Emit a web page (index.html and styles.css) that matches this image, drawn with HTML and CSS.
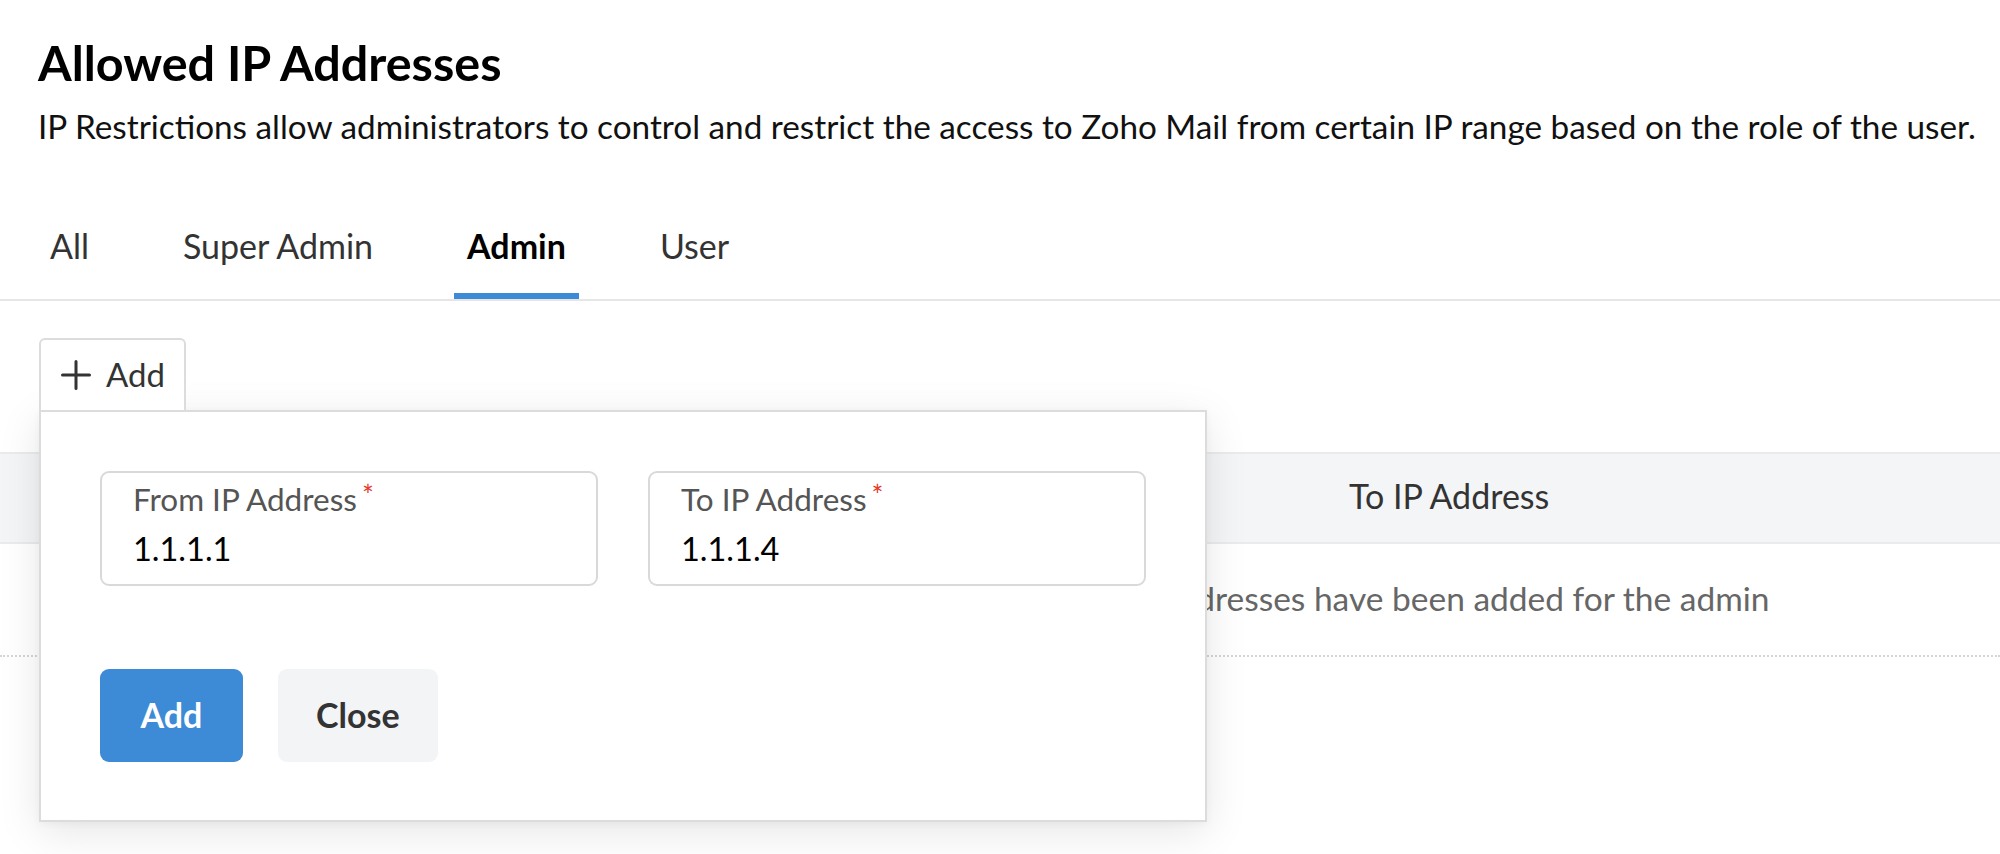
FILE: index.html
```html
<!DOCTYPE html>
<html lang="en">
<head>
<meta charset="utf-8">
<title>Allowed IP Addresses</title>
<link rel="stylesheet" href="styles.css">
</head>
<body>
<div class="page">
  <header class="head">
    <h1 class="title">Allowed IP Addresses</h1>
    <p class="desc">IP Restrictions allow administrators to control and restrict the access to Zoho Mail from certain IP range based on the role of the user.</p>
  </header>

  <nav class="tabs">
    <div class="tab">All</div>
    <div class="tab">Super Admin</div>
    <div class="tab active">Admin</div>
    <div class="tab">User</div>
  </nav>

  <div class="toolbar">
    <div class="add-wrap">
      <button class="add-toggle" type="button">
        <svg class="plus" width="32" height="32" viewBox="0 0 32 32" aria-hidden="true">
          <path d="M16 2.5V29.5M2.5 16H29.5" stroke="#333" stroke-width="3" stroke-linecap="round" fill="none"/>
        </svg>
        <span>Add</span>
      </button>
      <div class="popup">
        <div class="fields">
          <div class="field">
            <label class="field-label">From IP Address<span class="req">*</span></label>
            <input class="field-input" type="text" value="1.1.1.1">
          </div>
          <div class="field">
            <label class="field-label">To IP Address<span class="req">*</span></label>
            <input class="field-input" type="text" value="1.1.1.4">
          </div>
        </div>
        <div class="actions">
          <button class="btn btn-primary" type="button">Add</button>
          <button class="btn btn-secondary" type="button">Close</button>
        </div>
      </div>
    </div>
  </div>

  <section class="table">
    <div class="thead">
      <div class="th th-from">From IP Address</div>
      <div class="th th-to">To IP Address</div>
    </div>
    <div class="empty">No IP addresses have been added for the admin</div>
  </section>
</div>
</body>
</html>
```

FILE: styles.css
```css
* { box-sizing: border-box; }

html, body {
  margin: 0;
  padding: 0;
  background: #ffffff;
}

body {
  font-family: Lato, "Open Sans", "Liberation Sans", sans-serif;
  color: #111;
  width: 2000px;
  height: 854px;
  overflow: hidden;
}

.page {
  display: flex;
  flex-direction: column;
}

.head {
  padding: 33px 38px 0;
}

.title {
  margin: 0;
  font-size: 48.5px;
  line-height: 1.2;
  font-weight: 700;
  color: #000;
}

.desc {
  margin: 16px 0 0;
  font-size: 33.3px;
  line-height: 1.2;
  color: #111;
  white-space: nowrap;
}

.tabs {
  margin-top: 79px;
  display: flex;
  gap: 68px;
  padding-left: 37px;
  border-bottom: 2px solid #e6e6e6;
}

.tab {
  padding: 0 13px 26px;
  font-size: 34px;
  line-height: 1.2;
  color: #333;
  border-bottom: 6px solid transparent;
}

.tab.active {
  font-weight: 700;
  color: #000;
  border-bottom-color: #3d8ad6;
}

.toolbar {
  margin-top: 37px;
  padding-left: 39px;
  display: flex;
}

.add-wrap {
  position: relative;
}

.add-toggle {
  position: relative;
  z-index: 3;
  display: flex;
  align-items: center;
  gap: 14px;
  height: 72px;
  padding: 0 19px;
  background: #fff;
  border: 2px solid #dcdcdc;
  border-bottom: none;
  border-radius: 6px 6px 0 0;
  font-family: inherit;
  font-size: 33px;
  line-height: 1.2;
  color: #333;
}

.plus { display: block; }

.popup {
  position: absolute;
  z-index: 2;
  top: 100%;
  left: 0;
  width: 1168px;
  background: #fff;
  border: 2px solid #dcdcdc;
  padding: 59px 59px 58px;
  box-shadow: 0 10px 40px rgba(0, 0, 0, 0.10), 0 2px 8px rgba(0, 0, 0, 0.04);
}

.fields {
  display: grid;
  grid-template-columns: 498px 498px;
  gap: 50px;
}

.field {
  height: 115px;
  border: 2px solid #d9d9d9;
  border-radius: 9px;
  padding: 8px 31px 0;
  display: flex;
  flex-direction: column;
}

.field-label {
  font-size: 31.5px;
  line-height: 1.2;
  color: #555;
  white-space: nowrap;
}

.req {
  color: #e5392b;
  font-size: 28px;
  line-height: 1;
  vertical-align: top;
  margin-left: 5px;
}

.field-input {
  margin-top: 11px;
  border: none;
  outline: none;
  padding: 0;
  height: 38px;
  width: 100%;
  font-family: inherit;
  font-size: 32.5px;
  line-height: 1.2;
  color: #000;
  background: transparent;
}

.actions {
  margin-top: 83px;
  display: flex;
  gap: 35px;
}

.btn {
  height: 93px;
  min-width: 143px;
  padding: 0 38px;
  border: none;
  border-radius: 9px;
  font-family: inherit;
  font-size: 34px;
  font-weight: 700;
  line-height: 1.2;
}

.btn-primary {
  background: #3d8ad6;
  color: #fff;
}

.btn-secondary {
  background: #f3f4f6;
  color: #333;
}

.table {
  margin-top: 42px;
}

.thead {
  display: grid;
  grid-template-columns: 1349px 1fr;
  background: #f4f5f7;
  border-top: 2px solid #ebebeb;
  border-bottom: 2px solid #ebebeb;
  padding: 22px 0 25px;
}

.th {
  font-size: 34px;
  line-height: 1.2;
  color: #333;
}

.th-from { padding-left: 100px; }

.empty {
  padding: 34px 0 37px 1071px;
  font-size: 33.5px;
  line-height: 1.2;
  color: #666;
  border-bottom: 2px dotted #d6d6d6;
  white-space: nowrap;
}
```
